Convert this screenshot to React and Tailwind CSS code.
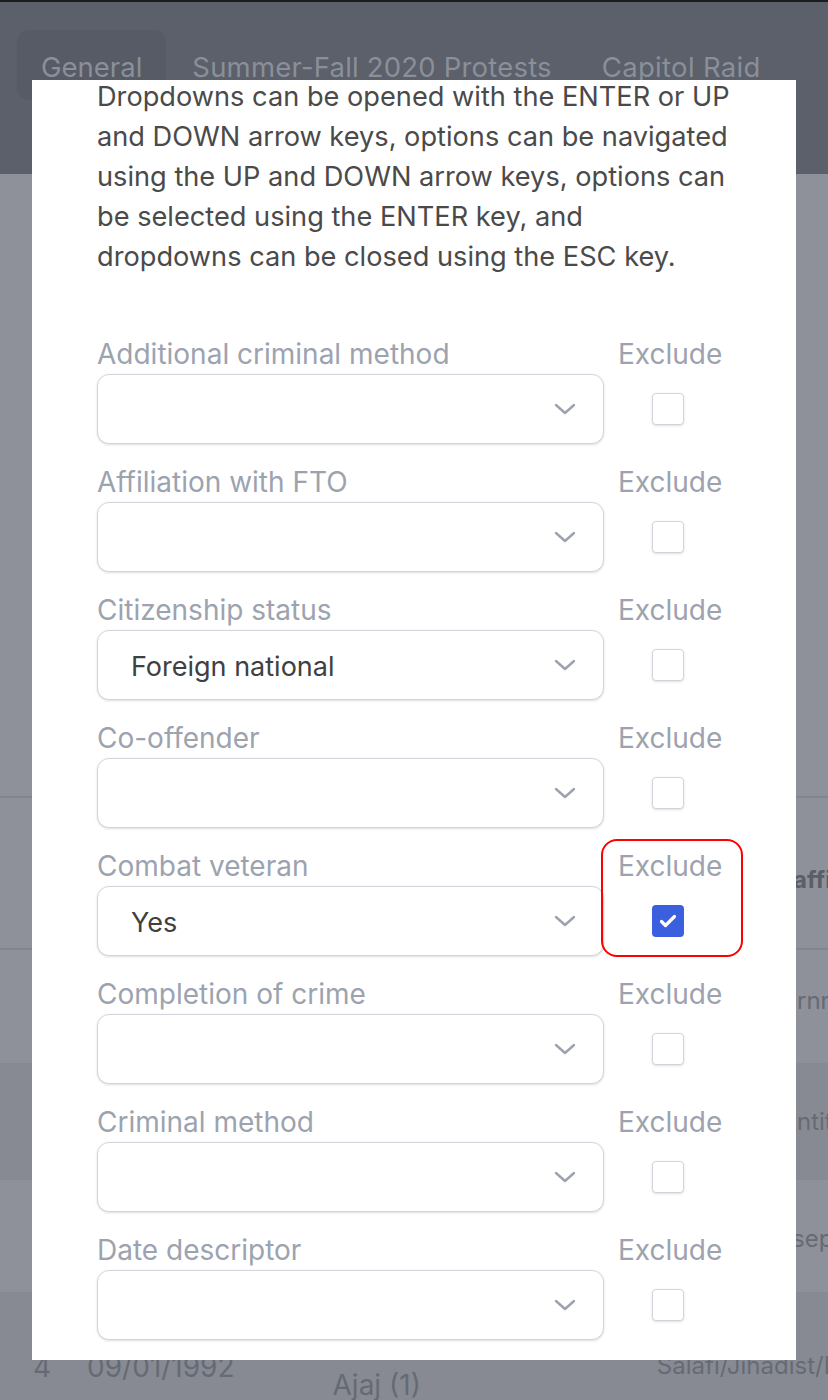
import React from "react";

const fields = [
  { label: "Additional criminal method", value: "" },
  { label: "Affiliation with FTO", value: "" },
  { label: "Citizenship status", value: "Foreign national" },
  { label: "Co-offender", value: "" },
  { label: "Combat veteran", value: "Yes", excluded: true },
  { label: "Completion of crime", value: "" },
  { label: "Criminal method", value: "" },
  { label: "Date descriptor", value: "" },
];

const Chevron = () => (
  <svg width="22" height="12" viewBox="0 0 22 12" fill="none">
    <path
      d="M2 2l9 8 9-8"
      stroke="#9ca3af"
      strokeWidth="2.4"
      strokeLinecap="round"
      strokeLinejoin="round"
    />
  </svg>
);

function Checkbox({ checked }) {
  if (checked) {
    return (
      <div className="w-[32px] h-[32px] rounded-[4px] bg-[#3a5fdf] flex items-center justify-center">
        <svg width="18" height="14" viewBox="0 0 18 14" fill="none">
          <path
            d="M2.5 7.5l4 4 9-9"
            stroke="white"
            strokeWidth="3.2"
            strokeLinecap="round"
            strokeLinejoin="round"
          />
        </svg>
      </div>
    );
  }
  return (
    <div className="w-[32px] h-[32px] rounded-[4px] border-[1.5px] border-[#d1d5db] bg-white shadow-sm" />
  );
}

function FieldRow({ field }) {
  return (
    <div className="grid grid-cols-[507px_1fr] gap-x-[14px] mb-[20px]">
      <div>
        <div className="h-[36px] leading-[36px] text-[28px] text-[#9ca3af] whitespace-nowrap">
          {field.label}
        </div>
        <div className="mt-[2px] h-[70px] rounded-[12px] border-[1.5px] border-[#d1d5db] shadow-sm bg-white flex items-center justify-between pl-[33px] pr-[27px]">
          <span className="pt-[5px] text-[27px] text-[#404040]">{field.value}</span>
          <Chevron />
        </div>
      </div>
      <div className="relative w-[100px]">
        <div className="h-[36px] leading-[36px] text-[28px] text-[#9ca3af] whitespace-nowrap">
          Exclude
        </div>
        <div className="flex justify-center mt-[21px]">
          <Checkbox checked={field.excluded} />
        </div>
        {field.excluded && (
          <div className="absolute left-[-17px] top-[-9px] w-[142px] h-[118px] rounded-[16px] border-2 border-[#ff0000]" />
        )}
      </div>
    </div>
  );
}

export default function App() {
  return (
    <div
      className="relative w-[828px] h-[1400px] overflow-hidden bg-[#8e9199]"
      style={{ fontFamily: "Inter, 'Noto Sans', sans-serif" }}
    >
      {/* page behind the modal, dimmed */}
      <div className="h-[174px] bg-[#5b606b] border-t-2 border-[#1c1c1e]">
        <div className="flex gap-[2px] pl-[17px] pt-[28px] text-[27.5px] text-[#8a8f99] whitespace-nowrap">
          <div className="h-[70px] px-[24px] pt-[6px] rounded-[12px] bg-[#565b66] flex items-center">
            General
          </div>
          <div className="h-[70px] px-[24px] pt-[6px] flex items-center tracking-[0.2px]">
            Summer-Fall 2020 Protests
          </div>
          <div className="h-[70px] px-[24px] pt-[6px] flex items-center tracking-[0.3px]">
            Capitol Raid
          </div>
        </div>
      </div>

      <div className="h-[622px]" />
      <div className="h-[154px] border-t-2 border-b-2 border-[#82858e] text-[24px] text-[#5a5e68] font-bold pl-[793px] pt-[64px] whitespace-nowrap">
        affiliation
      </div>
      <div className="h-[113px] text-[24px] text-[#666a73] pl-[797px] pt-[33px] whitespace-nowrap">
        rnment
      </div>
      <div className="h-[117px] bg-[#878a93] text-[24px] text-[#666a73] pl-[797px] pt-[41px] whitespace-nowrap">
        ntity
      </div>
      <div className="h-[112px] text-[24px] text-[#666a73] pl-[792px] pt-[41px] whitespace-nowrap">
        separatist
      </div>
      <div className="h-[108px] bg-[#878a93] text-[#666a73] flex whitespace-nowrap">
        <span className="ml-[33px] mt-[54px] text-[28px]">4</span>
        <span className="ml-[36px] mt-[54px] text-[28px]">09/01/1992</span>
        <span className="ml-[98px] mt-[72px] text-[28px]">Ajaj (1)</span>
        <span className="ml-[236px] mt-[56px] text-[24px]">Salafi/Jihadist/I</span>
      </div>

      {/* modal */}
      <div className="absolute left-[32px] top-[80px] w-[764px] h-[1280px] bg-white overflow-hidden px-[65px]">
        <p className="-mt-[3px] text-[27.2px] leading-[40px] text-[#4a4a4a]">
          Dropdowns can be opened with the ENTER or UP and DOWN arrow keys,
          options can be navigated using the UP and DOWN arrow keys, options
          can be selected using the ENTER key, and dropdowns can be closed
          using the ESC key.
        </p>
        <div className="mt-[59px]">
          {fields.map((f) => (
            <FieldRow key={f.label} field={f} />
          ))}
        </div>
      </div>
    </div>
  );
}
